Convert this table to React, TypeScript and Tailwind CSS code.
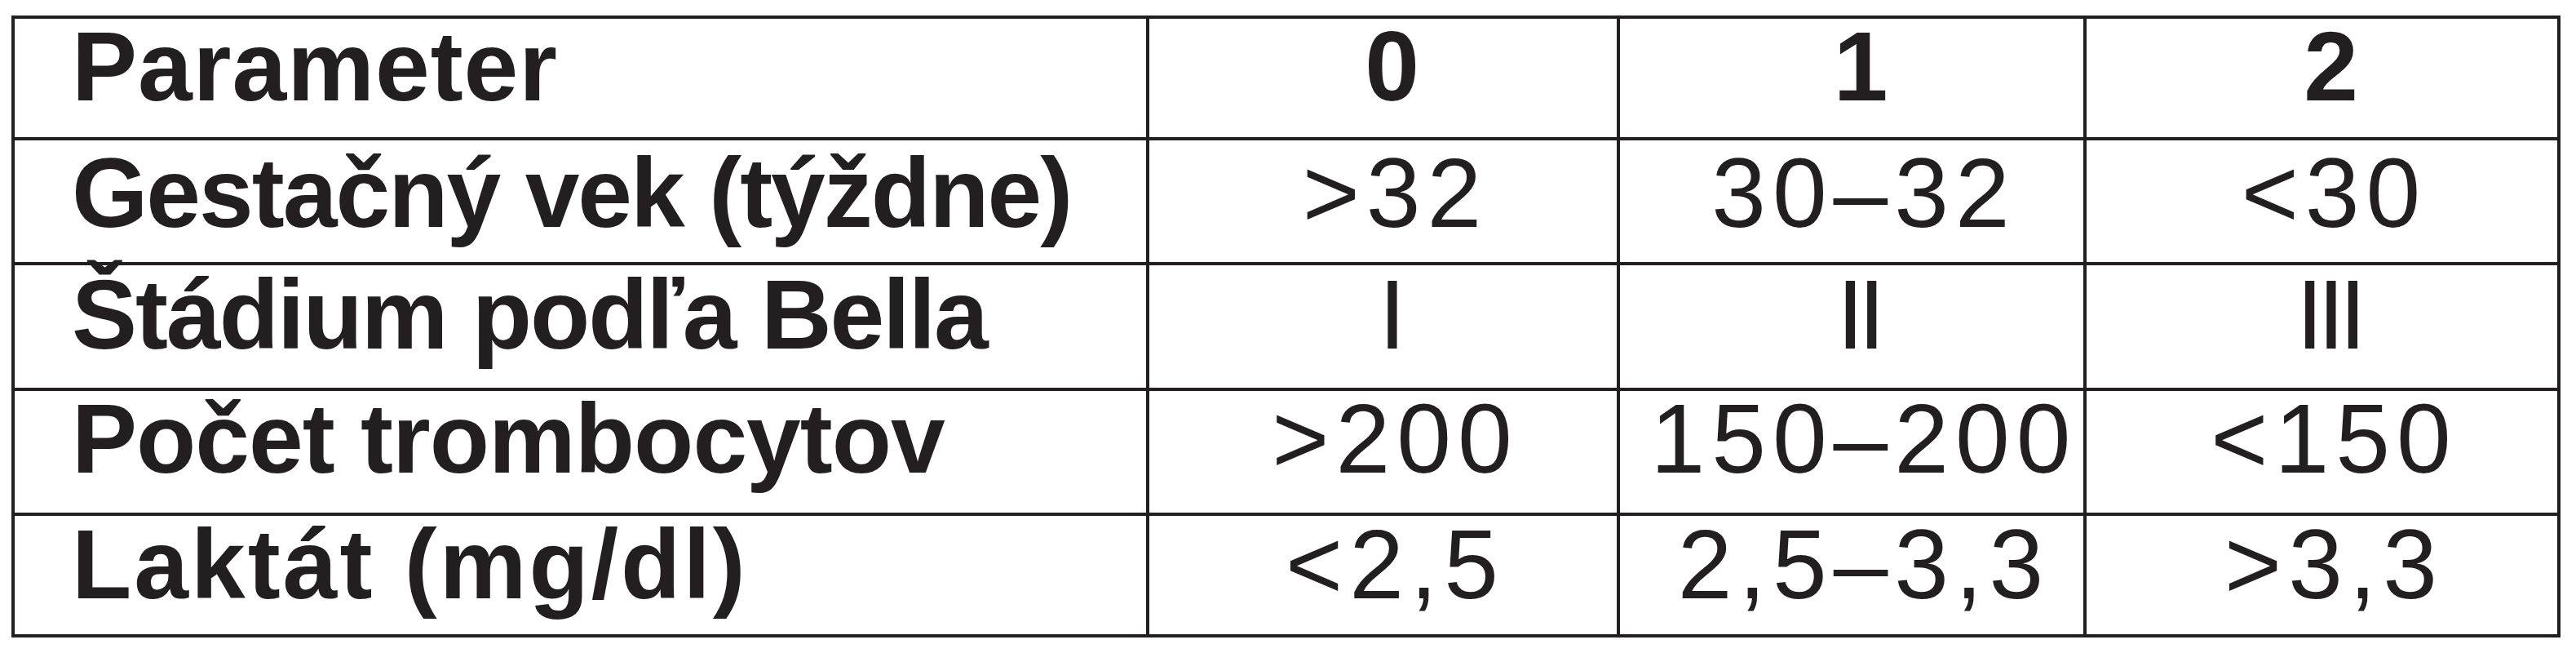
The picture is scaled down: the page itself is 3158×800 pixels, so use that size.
const header = { label: "Parameter", values: ["0", "1", "2"] };

const rows = [
  { label: "Gestačný vek (týždne)", values: [">32", "30–32", "<30"], pad: "pt-[6px]", track: "tracking-[-2px]" },
  { label: "Štádium podľa Bella", values: ["I", "II", "III"], pad: "pt-[2px]", track: "tracking-[-2px]", roman: true },
  { label: "Počet trombocytov", values: [">200", "150–200", "<150"], pad: "pt-0", track: "tracking-[-1px]" },
  { label: "Laktát (mg/dl)", values: ["<2,5", "2,5–3,3", ">3,3"], pad: "pt-[1px]", track: "tracking-[3px]" },
];

export default function App() {
  return (
    <div className="w-[3158px] h-[800px] bg-white pt-[19px] pl-[14px] font-['Liberation_Sans',Arial,sans-serif] text-[#231f20]">
      <div className="grid w-[3125px] grid-cols-[1387px_573px_568px_577px] grid-rows-[145px_149px_150px_149px_145px] gap-[4px] bg-[#231f20] p-[4px] text-[120px] leading-[116px]">
        {/* ------------------------------ header row ------------------------------ */}
        <div className="bg-white pl-[70px] font-bold tracking-[1px]">{header.label}</div>
        {header.values.map((v) => (
          <div key={v} className="bg-white pl-[22px] text-center font-bold">
            {v}
          </div>
        ))}

        {/* ------------------------------- body rows ------------------------------ */}
        {rows.map((row) => (
          <>
            <div key={row.label} className={`bg-white pl-[70px] font-bold ${row.track} ${row.pad}`}>
              {row.label}
            </div>
            {row.values.map((v) => (
              <div
                key={row.label + v}
                className={
                  row.roman
                    ? `bg-white pl-[16px] text-center tracking-[-7px] ${row.pad}`
                    : `bg-white pl-[30px] text-center tracking-[8px] ${row.pad}`
                }
              >
                {v}
              </div>
            ))}
          </>
        ))}
      </div>
    </div>
  );
}
